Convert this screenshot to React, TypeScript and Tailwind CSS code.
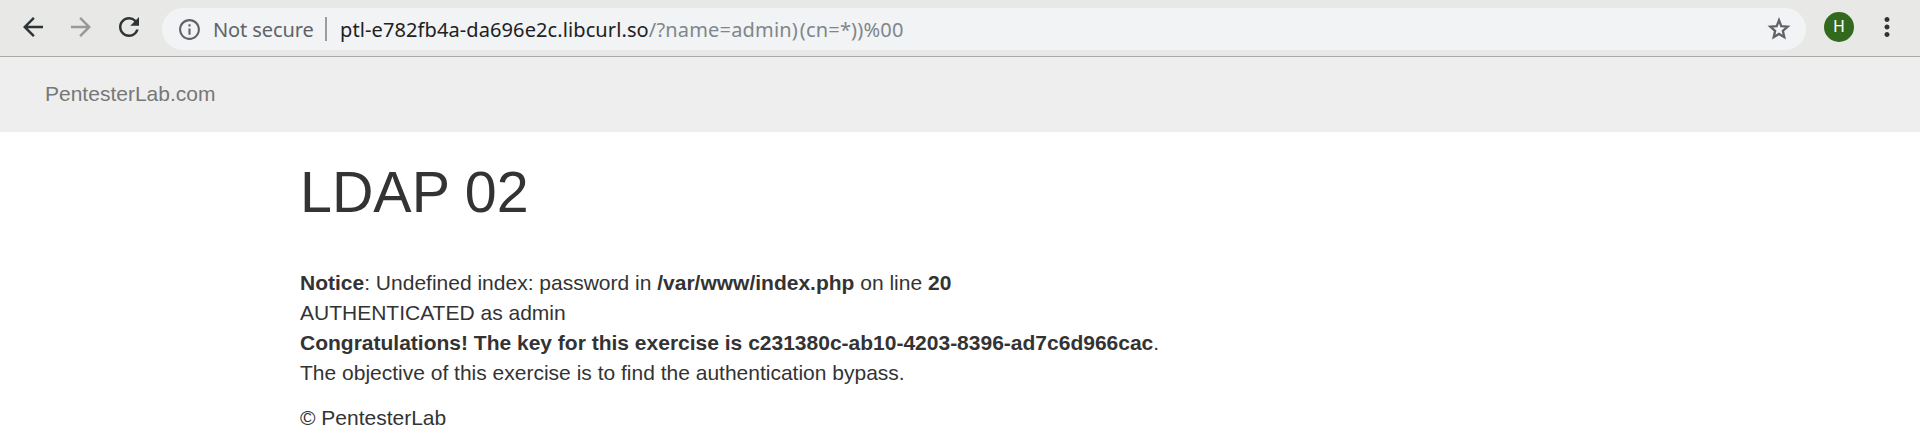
import React from 'react';
import { MdArrowBack, MdArrowForward, MdRefresh, MdInfoOutline, MdMoreVert } from 'react-icons/md';

export default function App() {
  return (
    <div className="h-[432px] overflow-hidden bg-white font-['Liberation_Sans',sans-serif] text-[#333]">
      <header className="flex h-[57px] items-start border-b border-[#a9a9a7] bg-[#e8e8e6] pt-2 font-['Noto_Sans',sans-serif]">
        <MdArrowBack className="ml-[18px] mt-1 size-[30px] shrink-0 text-[#2e3436]" />
        <MdArrowForward className="ml-[18px] mt-1 size-[30px] shrink-0 text-[#979a9a]" />
        <MdRefresh className="ml-[18px] mt-1 size-[30px] shrink-0 text-[#2e3436]" />
        <div className="ml-[18px] flex h-[42px] w-[1644px] shrink-0 items-center rounded-full bg-[#f1f3f4] text-[20px]">
          <MdInfoOutline className="ml-[15px] size-[25px] shrink-0 text-[#5f6368]" />
          <span className="ml-[11px] w-[112px] shrink-0 whitespace-nowrap pt-[2px] tracking-[-0.1px] text-[#5f6368]">Not secure</span>
          <span className="h-6 w-[2px] shrink-0 bg-[#9a9ca0]" />
          <span className="ml-[13px] grow whitespace-nowrap pt-[2px] tracking-[0.18px] text-[#80868b]"><span className="tracking-[0.1px] text-[#202124]">ptl-e782fb4a-da696e2c.libcurl.so</span>/?name=admin<span className="tracking-[2px]">)</span>(cn=*))%00</span>
          <svg viewBox="1.2 1.2 21.6 21.6" className="mr-[14px] size-[26px] shrink-0 fill-none stroke-[#5f6368] [stroke-miterlimit:8] [stroke-width:1.9]">
            <path d="M12 4.7 13.9 9.6 19.2 10 15.2 13.5 16.4 18.8 12 16.1 7.6 18.8 8.8 13.5 4.8 10 10.1 9.6Z" />
          </svg>
        </div>
        <span className="ml-[18px] mt-1 flex size-[30px] shrink-0 items-center justify-center rounded-full bg-[#33691e] font-['Roboto',sans-serif] text-base text-white">H</span>
        <MdMoreVert className="ml-[18px] mt-1 size-[30px] shrink-0 text-[#2e3436]" />
      </header>
      <nav className="flex h-[75px] items-center bg-[#eee] pb-[2px] pl-[45px] text-[21px] text-[#777]">PentesterLab.com</nav>
      <main className="pl-[300px] pt-[30px] text-[21px] leading-[30px]">
        <h1 className="text-[57.4px] leading-[60px]">LDAP 02</h1>
        <div className="mt-[46px]"><b>Notice</b>: Undefined index: password in <b>/var/www/index.php</b> on line <b>20</b></div>
        <div>AUTHENTICATED as admin</div>
        <div><b>Congratulations! The key for this exercise is c231380c-ab10-4203-8396-ad7c6d966cac</b>.</div>
        <div>The objective of this exercise is to find the authentication bypass.</div>
        <footer className="mt-[15px]">© PentesterLab</footer>
      </main>
    </div>
  );
}
